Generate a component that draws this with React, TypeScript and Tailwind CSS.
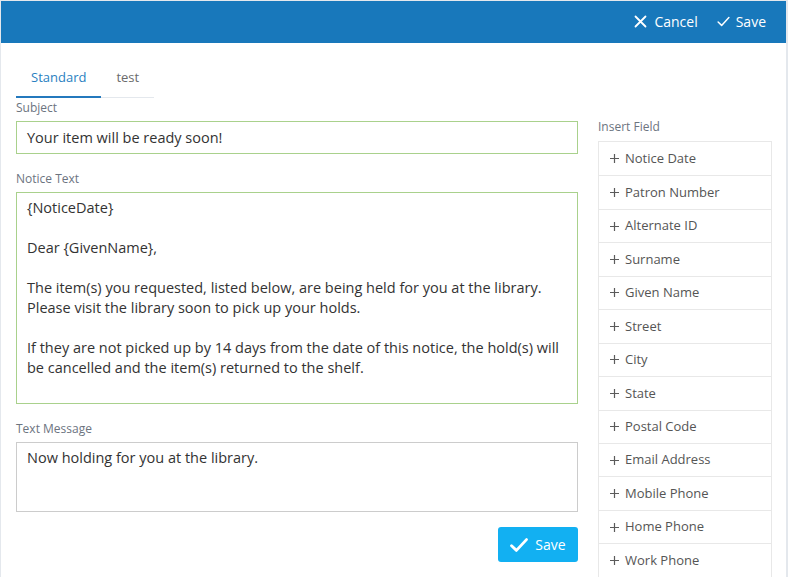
import React from "react";

const fields = [
  "Notice Date",
  "Patron Number",
  "Alternate ID",
  "Surname",
  "Given Name",
  "Street",
  "City",
  "State",
  "Postal Code",
  "Email Address",
  "Mobile Phone",
  "Home Phone",
  "Work Phone",
];

const noticeText = `{NoticeDate}

Dear {GivenName},

The item(s) you requested, listed below, are being held for you at the library.
Please visit the library soon to pick up your holds.

If they are not picked up by 14 days from the date of this notice, the hold(s) will be cancelled and the item(s) returned to the shelf.`;

function XIcon() {
  return (
    <svg width="13" height="13" viewBox="0 0 13 13" fill="none">
      <path d="M1.5 1.5 L11.5 11.5 M11.5 1.5 L1.5 11.5" stroke="white" strokeWidth="1.8" strokeLinecap="round" />
    </svg>
  );
}

function CheckIcon({ size = 13, width = 1.6 }: { size?: number; width?: number }) {
  return (
    <svg width={size} height={size} viewBox="0 0 14 14" fill="none">
      <path d="M1.2 7.6 L5 11.2 L12.8 2.8" stroke="white" strokeWidth={width} strokeLinecap="round" strokeLinejoin="round" />
    </svg>
  );
}

function PlusIcon() {
  return (
    <svg width="9" height="9" viewBox="0 0 9 9" fill="none">
      <path d="M4.5 0 V9 M0 4.5 H9" stroke="#5b5b5b" strokeWidth="1.2" />
    </svg>
  );
}

export default function App() {
  return (
    <div
      className="w-[788px] h-[577px] overflow-hidden bg-white border-l border-t border-[#e4e8ed] border-r-2 box-border"
      style={{ fontFamily: '"Open Sans", "Noto Sans", sans-serif' }}
    >
      <div className="h-[42px] bg-[#1878bb] flex items-center justify-end pr-[20px] pb-[2px] text-white text-[14px]">
        <button className="flex items-center gap-[7px] mr-[19px]">
          <XIcon />
          <span>Cancel</span>
        </button>
        <button className="flex items-center gap-[6px]">
          <CheckIcon />
          <span>Save</span>
        </button>
      </div>

      <div className="flex pl-[15px] gap-[20px]">
        <div className="w-[562px] flex flex-col">
          <div className="flex items-end mt-[18px] text-[13px] leading-[19px]">
            <div className="px-[15px] pt-[7px] pb-[9px] border-b-2 border-[#2479bd] text-[#2a7fc1]">Standard</div>
            <div className="px-[15px] pt-[7px] pb-[10px] border-b border-[#e4e8ed] text-[#6b6b6b]">test</div>
          </div>

          <label className="mt-[1px] text-[12px] leading-[17px] text-[#6c747f]">Subject</label>
          <div className="mt-[5px] h-[33px] border border-[#a9d18c] px-[10px] flex items-center text-[14.5px] text-[#333]">
            Your item will be ready soon!
          </div>

          <label className="mt-[16px] text-[12px] leading-[17px] text-[#6c747f]">Notice Text</label>
          <textarea
            className="mt-[5px] h-[212px] border border-[#a9d18c] px-[10px] pt-[5px] text-[14.5px] leading-[20px] text-[#333] outline-none resize-none"
            defaultValue={noticeText}
          />

          <label className="mt-[16px] text-[12px] leading-[17px] text-[#6c747f]">Text Message</label>
          <textarea
            className="mt-[5px] h-[70px] border border-[#cccccc] px-[10px] pt-[5px] text-[14.5px] leading-[20px] text-[#333] outline-none resize-none"
            defaultValue="Now holding for you at the library."
          />

          <div className="flex justify-end mt-[15px]">
            <button className="w-[80px] h-[35px] rounded-[3px] bg-[#12b0f2] flex items-center justify-center gap-[7px] text-white text-[14px]">
              <CheckIcon size={18} width={2.2} />
              <span>Save</span>
            </button>
          </div>
        </div>

        <div className="w-[174px] pt-[75px]">
          <div className="text-[12px] leading-[17px] text-[#6c747f] mb-[6px]">Insert Field</div>
          <div className="border border-[#e8e8e8]">
            {fields.map((f, i) => (
              <div
                key={f}
                className={
                  "h-[33.45px] flex items-center pl-[11px] gap-[6px] text-[13px] text-[#555]" +
                  (i > 0 ? " border-t border-[#e8e8e8]" : "")
                }
              >
                <PlusIcon />
                <span>{f}</span>
              </div>
            ))}
          </div>
        </div>
      </div>
    </div>
  );
}
